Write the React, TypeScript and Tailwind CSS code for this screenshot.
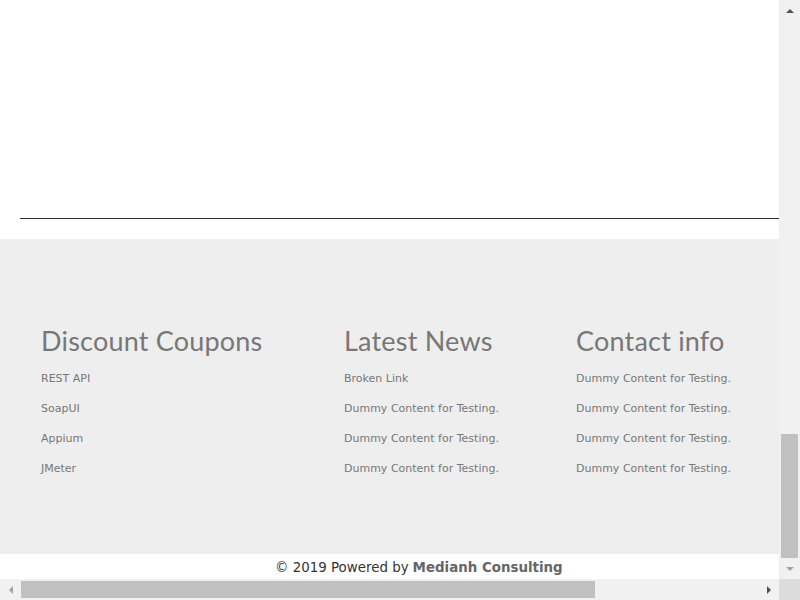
import React from 'react';

const coupons = ['REST API', 'SoapUI', 'Appium', 'JMeter'];
const news = ['Broken Link', 'Dummy Content for Testing.', 'Dummy Content for Testing.', 'Dummy Content for Testing.'];
const contact = [
  'Dummy Content for Testing.',
  'Dummy Content for Testing.',
  'Dummy Content for Testing.',
  'Dummy Content for Testing.',
];

function FooterColumn({ title, items, className }: { title: string; items: string[]; className?: string }) {
  return (
    <div className={className}>
      <h3 className="text-[27px] leading-[32px] tracking-[0.2px] text-[#777777] font-['Lato',sans-serif]">{title}</h3>
      <ul className="mt-[14px] flex flex-col gap-[14px]">
        {items.map((item, i) => (
          <li key={i} className="text-[11px] leading-[16px] text-[#777777]">
            {item}
          </li>
        ))}
      </ul>
    </div>
  );
}

function Arrow({ dir, color }: { dir: 'up' | 'down' | 'left' | 'right'; color: string }) {
  const pts = {
    up: '0,4 4,0 8,4',
    down: '0,0 8,0 4,4',
    left: '4,0 4,8 0,4',
    right: '0,0 0,8 4,4',
  }[dir];
  const vertical = dir === 'up' || dir === 'down';
  return (
    <svg width={vertical ? 8 : 4} height={vertical ? 4 : 8} viewBox={vertical ? '0 0 8 4' : '0 0 4 8'}>
      <polygon points={pts} fill={color} />
    </svg>
  );
}

export default function App() {
  return (
    <div
      className="w-[800px] h-[600px] overflow-hidden flex flex-col bg-white"
      style={{ fontFamily: '"DejaVu Sans", Verdana, sans-serif' }}
    >
      <div className="flex h-[579px]">
        {/* page content */}
        <div className="w-[779px] flex flex-col">
          <div className="h-[239px] flex flex-col">
            <div className="h-[218px]" />
            <div className="ml-[20px] border-t border-[#2f3436]" />
          </div>

          <div className="h-[315px] bg-[#eeeeee] flex pt-[86px] pl-[41px]">
            <FooterColumn title="Discount Coupons" items={coupons} className="w-[303px]" />
            <FooterColumn title="Latest News" items={news} className="w-[232px]" />
            <FooterColumn title="Contact info" items={contact} />
          </div>

          <div className="h-[25px] flex items-center pt-[3px] pl-[275px] text-[13.4px] text-[#333333]">
            <span>© 2019 Powered by </span>
            <span className="ml-[4px] font-bold text-[#666666]">Medianh Consulting</span>
          </div>
        </div>

        {/* vertical scrollbar */}
        <div className="w-[21px] bg-[#f1f1f1] flex flex-col items-center">
          <div className="h-[21px] flex items-center justify-center">
            <Arrow dir="up" color="#505050" />
          </div>
          <div className="flex-1 w-full flex flex-col justify-end px-[2px]">
            <div className="h-[124px] bg-[#c1c1c1]" />
          </div>
          <div className="h-[21px] flex items-center justify-center">
            <Arrow dir="down" color="#a3a3a3" />
          </div>
        </div>
      </div>

      {/* horizontal scrollbar */}
      <div className="flex h-[21px]">
        <div className="w-[779px] bg-[#f1f1f1] flex items-center">
          <div className="w-[21px] flex items-center justify-center">
            <Arrow dir="left" color="#a3a3a3" />
          </div>
          <div className="flex-1 h-full flex py-[2px]">
            <div className="w-[574px] bg-[#c1c1c1]" />
          </div>
          <div className="w-[21px] flex items-center justify-center">
            <Arrow dir="right" color="#505050" />
          </div>
        </div>
        <div className="w-[21px] bg-[#dcdcdc]" />
      </div>
    </div>
  );
}
